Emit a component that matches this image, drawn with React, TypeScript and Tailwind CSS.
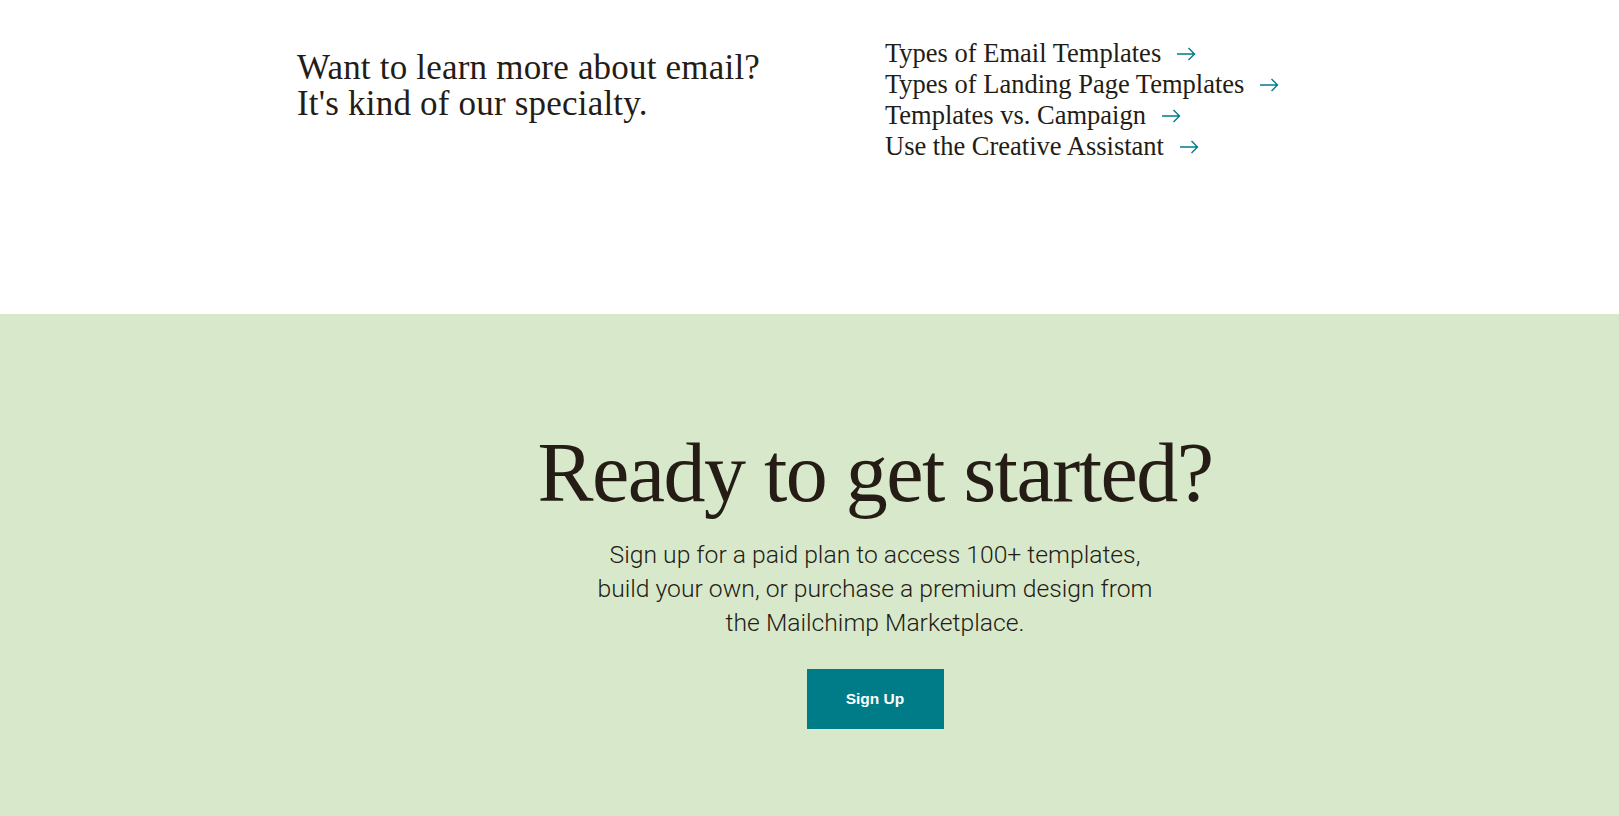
import React from "react";

const serif = { fontFamily: '"Liberation Serif", "Times New Roman", serif' };

const links = [
  "Types of Email Templates",
  "Types of Landing Page Templates",
  "Templates vs. Campaign",
  "Use the Creative Assistant",
];

const Arrow = () => (
  <svg width="20" height="14" viewBox="0 0 20 14" fill="none" className="shrink-0">
    <path d="M1 7h17.5M12.5 1l6 6-6 6" stroke="#007c89" strokeWidth="1.4" />
  </svg>
);

export default function App() {
  return (
    <div className="w-full bg-white text-[#241c15]">
      {/* learn more */}
      <section className="h-[314px] bg-white">
        <div className="ml-[297px] w-[1156px] grid grid-cols-2 gap-x-[20px] pt-[38px]">
          <h2
            className="mt-[12px] text-[35px] leading-[36px] tracking-[0.2px] font-normal"
            style={serif}
          >
            Want to learn more about email?
            <br />
            It's kind of our specialty.
          </h2>
          <ul className="flex flex-col" style={serif}>
            {links.map((l) => (
              <li key={l}>
                <a href="#" className="inline-flex items-center gap-[15px] text-[26.5px] leading-[31px]">
                  <span>{l}</span>
                  <Arrow />
                </a>
              </li>
            ))}
          </ul>
        </div>
      </section>

      {/* cta */}
      <section className="bg-[#d8e9cb] pt-[117px] pb-[87px]">
        <div className="ml-[297px] w-[1156px] flex flex-col items-center text-center">
          <h2
            className="text-[84px] leading-[84px] tracking-[-1.5px] font-normal"
            style={serif}
          >
            Ready to get started?
          </h2>
          <p
            className="mt-[23px] text-[24.7px] leading-[34px] font-light text-[#241c15]"
            style={{ fontFamily: 'Roboto, "Liberation Sans", sans-serif' }}
          >
            Sign up for a paid plan to access 100+ templates,
            <br />
            build your own, or purchase a premium design from
            <br />
            the Mailchimp Marketplace.
          </p>
          <button
            className="mt-[29px] h-[60px] w-[137px] bg-[#007c89] text-white text-[15.5px] font-bold"
            style={{ fontFamily: '"Liberation Sans", Arial, sans-serif' }}
          >
            Sign Up
          </button>
        </div>
      </section>
    </div>
  );
}
